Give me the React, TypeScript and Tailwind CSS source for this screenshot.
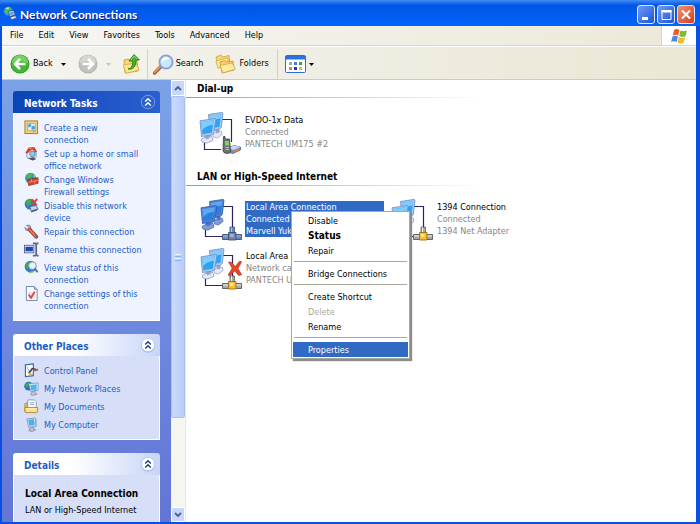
import React from 'react';
import { clsx } from 'clsx';

type IconProps = { className?: string };

/* ---------- Icons ---------- */

const GlobeIcon: React.FC<IconProps> = ({ className }) => (
  <svg viewBox="0 0 16 16" className={className} aria-hidden="true">
    <circle cx="6" cy="6" r="5.2" fill="#3c8fe0" />
    <path d="M2 3Q5 0 8 1L9 4 6 6 5 9 2 8Z" fill="#4fbf3d" />
    <path d="M3 3Q5 1 7 2L6 4Z" fill="#b9efa0" />
    <path d="M6 6l6-1 2 5-6 2z" fill="#cfe4f7" stroke="#29466f" strokeWidth=".8" />
    <path d="M7.500 7l4-.6 1.200 3-4 1.200z" fill="#5aa5e8" />
    <path d="M8 13l6-2 1.500 2.500L10 15.500z" fill="#e3e6ee" stroke="#4b5774" strokeWidth=".7" />
  </svg>
);

const WindowsFlag: React.FC<IconProps> = ({ className }) => (
  <svg viewBox="0 0 18 17" className={className} aria-hidden="true">
    <path d="M3.200 2Q6 .2 9 2L7.600 8Q4.800 6.400 1.800 8Z" fill="#ee5a2a" />
    <path d="M10 2.600Q13 4.200 17 2.600L15.300 9Q12 10.200 8.700 8.500Z" fill="#7cbb35" />
    <path d="M1.600 9Q4.500 7.300 7.300 9L5.900 15Q3 13.300 0 15Z" fill="#4a86dd" />
    <path d="M8.300 9.500Q11.500 11.200 15 10L13.400 16Q10 17.200 6.900 15.500Z" fill="#f0bb2c" />
  </svg>
);

const BackIcon: React.FC<IconProps> = ({ className }) => (
  <svg viewBox="0 0 20 20" className={className} aria-hidden="true">
    <circle cx="10" cy="10" r="9.500" fill="#2f9a25" />
    <circle cx="10" cy="10" r="8.600" fill="#43b735" />
    <path d="M2 9a8 8 0 0 1 16 0Q10 5 2 9z" fill="#85db70" opacity=".75" />
    <path d="M15.500 10H6M10 5l-5 5 5 5" stroke="#fff" strokeWidth="2.600" fill="none" />
  </svg>
);

const ForwardIcon: React.FC<IconProps> = ({ className }) => (
  <svg viewBox="0 0 20 20" className={className} aria-hidden="true">
    <circle cx="10" cy="10" r="9.500" fill="#b3b3b0" />
    <circle cx="10" cy="10" r="8.600" fill="#c1c1be" />
    <path d="M2 9a8 8 0 0 1 16 0Q10 5 2 9z" fill="#d6d6d3" />
    <path d="M4.500 10H14M10 5l5 5-5 5" stroke="#fff" strokeWidth="2.600" fill="none" />
  </svg>
);

const UpFolderIcon: React.FC<IconProps> = ({ className }) => (
  <svg viewBox="0 0 17 20" className={className} aria-hidden="true">
    <path d="M1 6l5-1 1 2 7-1 1 11-13 2z" fill="#f6d873" stroke="#c79a2c" strokeWidth=".8" />
    <path d="M0 11l13-2 3 7-13 3.400z" fill="#fbe68f" stroke="#d4a837" strokeWidth=".8" />
    <path d="M5 15c4-1 5-4 4.500-8H6l5-6.500L16.500 6H13c.5 6-3 10-8 9z" fill="#46ae2f" stroke="#23761a" strokeWidth=".8" />
    <path d="M8 6l3-4 3 3" fill="none" stroke="#8be06a" />
  </svg>
);

const SearchIcon: React.FC<IconProps> = ({ className }) => (
  <svg viewBox="0 0 21 21" className={className} aria-hidden="true">
    <path d="M1.500 19L8 12.500" stroke="#a4531b" strokeWidth="3.400" strokeLinecap="round" />
    <path d="M1.500 18.500L7 13" stroke="#f0a65a" strokeWidth="1.600" strokeLinecap="round" />
    <circle cx="13" cy="8" r="6.600" fill="#c9e8fb" stroke="#8b9ed6" strokeWidth="1.800" />
    <path d="M8.500 8a4.500 4.500 0 0 1 8-3Q12 5 8.500 8z" fill="#fff" />
  </svg>
);

const FoldersIcon: React.FC<IconProps> = ({ className }) => (
  <svg viewBox="0 0 21 20" className={className} aria-hidden="true">
    <path d="M1 3l5-2 1.500 2L14 1.500 15 11 3 14z" fill="#f5d67a" stroke="#cf9d33" strokeWidth=".8" />
    <path d="M1 7l11-3 3 7-12 3z" fill="#fdeaa5" stroke="#d8aa42" strokeWidth=".8" />
    <path d="M5 8l5-1.500L11.500 8 18 7l1 9-12 3z" fill="#f5d067" stroke="#c99229" strokeWidth=".8" />
    <path d="M5 11.500L17 9l3.500 6L8 19z" fill="#fdeba0" stroke="#d6a53a" strokeWidth=".8" />
  </svg>
);

const ViewsIcon: React.FC<IconProps> = ({ className }) => (
  <svg viewBox="0 0 21 18" className={className} aria-hidden="true">
    <rect x=".5" y=".5" width="20" height="17" rx="1" fill="#fff" stroke="#2c6bd4" />
    <path d="M0 1h21v3.500H0z" fill="#2a72dd" />
    <path d="M4 7h3v3H4z" fill="#9aa6c4" />
    <path d="M9 7h3v3H9z" fill="#4a77d8" />
    <path d="M14 7h3v3h-3z" fill="#3fa33b" />
    <path d="M4 12h3v3H4z" fill="#ec7b47" />
    <path d="M9 12h3v3H9z" fill="#1f3e9e" />
    <path d="M14 12h3v3h-3z" fill="#d9ba43" />
  </svg>
);

const NewConnectionIcon: React.FC<IconProps> = ({ className }) => (
  <svg viewBox="0 0 16 16" className={className} aria-hidden="true">
    <rect x="1" y="1" width="13.500" height="13.500" fill="#f3d37b" stroke="#a27a2c" />
    <rect x="3.500" y="3.500" width="8.500" height="8" fill="#dcecfb" stroke="#c09a45" strokeWidth=".7" />
    <path d="M4.500 5l3-1v3l-3 1zM8 7l3.500-1v3.500L8 10.500z" fill="#439be2" />
    <path d="M9 10l4 2-3 1z" fill="#8ba0b7" />
  </svg>
);

const HomeNetworkIcon: React.FC<IconProps> = ({ className }) => (
  <svg viewBox="0 0 16 16" className={className} aria-hidden="true">
    <path d="M3 7l5-4 5 3v6l-5 2-5-2z" fill="#e9edf5" stroke="#7784a0" strokeWidth=".7" />
    <path d="M1.500 7L5 1.500l6-.5 3 5-2 1-3-3.500L3 8.500z" fill="#d9432b" />
    <path d="M5 2l4-.5-2 2z" fill="#f58b6b" />
    <circle cx="9" cy="8.500" r="3" fill="#8ec7f0" stroke="#49678e" strokeWidth=".7" />
    <path d="M4 13l6-1 3 2-4 1.500z" fill="#48506a" />
  </svg>
);

const FirewallIcon: React.FC<IconProps> = ({ className }) => (
  <svg viewBox="0 0 16 16" className={className} aria-hidden="true">
    <circle cx="7" cy="6.500" r="5.800" fill="#3887d3" />
    <path d="M2 4Q5 0 10 1.500L8 5 4 8z" fill="#4cb848" />
    <path d="M10 2l3 3-3 1z" fill="#7ed66a" />
    <path d="M4 8l11-2v6L5 14.500z" fill="#d2472c" stroke="#86200f" strokeWidth=".7" />
    <path d="M4.500 11L15 9M8 7.300v3M11.500 9.500v3" stroke="#f3a58c" strokeWidth=".7" />
  </svg>
);

const DisableIcon: React.FC<IconProps> = ({ className }) => (
  <svg viewBox="0 0 16 16" className={className} aria-hidden="true">
    <circle cx="6.500" cy="6.500" r="5.800" fill="#2f7bd0" />
    <path d="M1.500 4Q4 .5 7 1L8 5 4 9z" fill="#46ad44" />
    <path d="M6 9l7-1 2 4-7 3z" fill="#bcd6ee" stroke="#37517c" strokeWidth=".8" />
    <path d="M8 14l6-1.500" stroke="#4d5874" strokeWidth="1.600" />
    <path d="M8.500 1.500l5 6M14 1L8.500 8" stroke="#e04125" strokeWidth="2" />
  </svg>
);

const RepairIcon: React.FC<IconProps> = ({ className }) => (
  <svg viewBox="0 0 16 16" className={className} aria-hidden="true">
    <path d="M1 3.500L3.500 1l3 1 1 3.500L5 7 2 6.500z" fill="#aab2c4" stroke="#5c657d" strokeWidth=".8" />
    <path d="M1 1.500l3 3" stroke="#eef3ff" strokeWidth="1.500" />
    <path d="M6 6l7 7.500" stroke="#9d3420" strokeWidth="4" strokeLinecap="round" />
    <path d="M6 6l6.500 7" stroke="#ea7a5a" strokeWidth="2.200" strokeLinecap="round" />
    <path d="M12 11l2.500 3" stroke="#5d6373" strokeWidth="1.600" />
  </svg>
);

const RenameIcon: React.FC<IconProps> = ({ className }) => (
  <svg viewBox="0 0 16 16" className={className} aria-hidden="true">
    <rect x=".5" y="3.500" width="10" height="8" fill="#fff" stroke="#5b6680" />
    <rect x="1.500" y="5" width="8" height="5" fill="#1d46b8" />
    <path d="M9.500 1.500h2.500l1 1 1-1h1.500M9.500 14.500h2.500l1-1 1 1h1.500M13 2.500v11" stroke="#59647c" strokeWidth="1.800" fill="none" />
  </svg>
);

const StatusIcon: React.FC<IconProps> = ({ className }) => (
  <svg viewBox="0 0 16 16" className={className} aria-hidden="true">
    <circle cx="7" cy="7" r="6.300" fill="#2f78c8" />
    <path d="M2 4Q5 0 9 1.500L6 5 4 10 1.500 8z" fill="#43a843" />
    <circle cx="9" cy="6" r="4" fill="#e4f3fd" stroke="#8a9ab0" />
    <path d="M11.500 9l3 4" stroke="#5c667c" strokeWidth="2" />
    <path d="M5 13.500l5-1" stroke="#7dcd60" strokeWidth="1.500" />
  </svg>
);

const SettingsIcon: React.FC<IconProps> = ({ className }) => (
  <svg viewBox="0 0 16 16" className={className} aria-hidden="true">
    <path d="M2.500.5H11L14 3.500v12H2.500z" fill="#f7f9ff" stroke="#7182a6" />
    <path d="M11 .5v3h3" fill="#c5d2ea" stroke="#7182a6" />
    <path d="M4.500 6.500h7v7h-7z" fill="#dbe4f5" />
    <path d="M5 9l2.500 3.500L11.500 6" fill="none" stroke="#e34d25" strokeWidth="2" />
  </svg>
);

const ControlPanelIcon: React.FC<IconProps> = ({ className }) => (
  <svg viewBox="0 0 16 16" className={className} aria-hidden="true">
    <path d="M1.500 2L10 1v12.500l-8.500 1z" fill="#fff" stroke="#3868a8" strokeWidth="1.200" />
    <path d="M3 4l4 7 1-6" stroke="#7ea9dc" fill="none" />
    <path d="M5 11l4-5 4 1" stroke="#35415c" strokeWidth="1.600" fill="none" />
    <path d="M10 8l5-1" stroke="#b75b35" strokeWidth="2" />
    <path d="M4 9l3 4 3-2" stroke="#e0a836" strokeWidth="1.300" fill="none" />
  </svg>
);

const NetworkPlacesIcon: React.FC<IconProps> = ({ className }) => (
  <svg viewBox="0 0 16 16" className={className} aria-hidden="true">
    <circle cx="5" cy="5.500" r="4.700" fill="#2770bd" />
    <path d="M1 4Q3 1 6 1L5 5 3 8z" fill="#42a943" />
    <path d="M5 3l10-1v8l-8 1z" fill="#e9f2fc" stroke="#7089ae" strokeWidth=".8" />
    <path d="M6.500 4.200l7-.8v5.800l-6 .6z" fill="#4cb6f2" />
    <path d="M9 11l3-.5v2l2 1.500-5 1.500-2-1z" fill="#bac4d6" stroke="#69758e" strokeWidth=".6" />
  </svg>
);

const DocumentsIcon: React.FC<IconProps> = ({ className }) => (
  <svg viewBox="0 0 16 16" className={className} aria-hidden="true">
    <path d="M1 5l3-1v9H1z" fill="#e9bf56" stroke="#aa7e24" strokeWidth=".8" />
    <path d="M4 1h7l2 2v8H4z" fill="#fff" stroke="#7c8bab" strokeWidth=".8" />
    <path d="M6 4h5M6 6h5" stroke="#8ba6d5" />
    <path d="M1 13.500V9h13.500v4.500q0 1-1 1H2q-1 0-1-1z" fill="#fadf84" stroke="#aa7e24" strokeWidth=".9" />
    <path d="M2 10.500h11.500" stroke="#fff4c0" />
  </svg>
);

const ComputerIcon: React.FC<IconProps> = ({ className }) => (
  <svg viewBox="0 0 16 16" className={className} aria-hidden="true">
    <path d="M3 2l9-1 1 9-8 1z" fill="#e8f0fa" stroke="#7389ac" strokeWidth=".8" />
    <path d="M4.300 3l6.500-.8.8 6.500-6 .6z" fill="#49b1ee" />
    <path d="M11.500 1.500l2 1v8l-1-1z" fill="#9eabc2" />
    <path d="M7 11l3-.3.500 2 2 1-4 1.800-3.500-1z" fill="#b7c1d3" stroke="#626f89" strokeWidth=".6" />
  </svg>
);

const DoubleChevron: React.FC<{ primary?: boolean }> = ({ primary }) => (
  <svg viewBox="0 0 16 16" className="h-4 w-4" aria-hidden="true">
    <circle cx="8" cy="8.500" r="7" fill="#4a66ac" opacity=".4" />
    <circle cx="8" cy="8" r="6.700" fill={primary ? '#2a60cc' : '#fff'} stroke={primary ? '#8aa9e8' : '#b6c3e6'} strokeWidth=".8" />
    <path
      d="M5.200 7.500L8 4.800l2.800 2.700M5.200 11.500L8 8.800l2.800 2.700"
      fill="none"
      stroke={primary ? '#fff' : '#1c3f94'}
      strokeWidth="1.500"
    />
  </svg>
);

const Caret: React.FC<IconProps> = ({ className }) => (
  <svg viewBox="0 0 5 3" className={clsx('h-[3px] w-[5px]', className)} aria-hidden="true">
    <path d="M0 0h5L2.500 3z" fill="currentColor" />
  </svg>
);

/* Two monitors wired to a plug, phone or broken plug */
type ConnectionKind = 'phone' | 'lan' | 'selected' | 'unplugged';

const ConnectionIcon: React.FC<{ kind: ConnectionKind }> = ({ kind }) => {
  const picked = kind === 'selected';
  const frame = picked ? '#4f7fd2' : '#a9c8f0';
  const edge = picked ? '#2f57a8' : '#6a8cc4';
  const screen = picked ? '#2a7fe0' : '#2ea3f4';
  const shine = picked ? '#5fa6ee' : '#7dcdff';
  const foot = picked ? '#5272b6' : '#9aa3c4';
  const base = picked ? '#7f9cd8' : '#e6e9f5';
  const hub = picked ? '#6f87ae' : '#f7bf2a';
  const metal = picked ? '#7088b8' : '#a9a9a4';
  const metalEdge = picked ? '#2d436f' : '#4a4a48';

  return (
    <svg viewBox="0 0 42 43" className="h-[43px] w-[42px] shrink-0" aria-hidden="true">
      <path d="M23 7.500h9.500V30M5.500 31v6.500H22" fill="none" stroke="#2b2362" strokeWidth="1.200" />
      {/* rear monitor */}
      <path d="M14 22l5-3.500 3.500 1 .5 3-4.500 3.500-4-1z" fill={base} stroke={foot} strokeWidth=".8" />
      <path d="M16 18l4-1 .5 3.500-3 1z" fill={foot} />
      <path d="M9.500 2.500L23 .4l1 .8L22.300 15.500l-2 1.800-9.300 1.400z" fill={frame} stroke={edge} strokeWidth=".8" />
      <path d="M10.800 3.800L22 2l-1.500 12.800-9 1.600z" fill={screen} />
      <path d="M10.800 3.800L22 2l-.6 4.500Q15 7 11.200 12z" fill={shine} />
      {/* front monitor */}
      <path d="M2 27.500l6-3.500 5 .5 1 3.500-6 3-5-1z" fill={base} stroke={foot} strokeWidth=".9" />
      <path d="M5.500 23.500l4.500-1 1 3.500-4 1.500z" fill={foot} />
      <path d="M1 8.800L15.800 6.500l1.200.8L14.700 21.300l-1.700 1.800-10.500 1.400z" fill={frame} stroke={edge} strokeWidth=".8" />
      <path d="M2.300 10.100L14.800 8.200l-2 12.500-9.500 1.500z" fill={screen} />
      <path d="M2.300 10.100L14.800 8.200l-.8 4.800Q7 13 3 18.500z" fill={shine} />

      {kind === 'phone' ? (
        <g>
          <path d="M29 36l6-2.500 6.500 1.500v3L34 41.500 28 40z" fill="#7f8cb8" stroke="#505b7b" strokeWidth=".7" />
          <path d="M29 36l6-2.500 6.500 1.500-7 3z" fill="#cdd6ec" />
          <path d="M35 39.700l5-2" stroke="#ec7a3c" strokeWidth="1.500" />
          <path d="M24.500 24.500h1.500V27h4.500l1 13-2 1.500-4-.5-1.500-2z" fill="#6b7375" stroke="#363c3f" strokeWidth=".8" />
          <path d="M26 29h3.800l.4 4.500h-4z" fill="#79da4e" />
          <path d="M26.500 35.500h3.500M26.700 37.500h3.500" stroke="#c7cfd1" strokeWidth=".9" />
        </g>
      ) : (
        <g>
          <path d="M30 28h4.500v6H30z" fill={metal} stroke={metalEdge} strokeWidth=".7" />
          <path d="M31.500 28.500v5" stroke={picked ? '#b9c8e8' : '#f4f4f0'} />
          <path d="M22.500 35.500h19v5h-19z" fill={metal} stroke={metalEdge} strokeWidth=".8" />
          <path d="M23 37h18" stroke={picked ? '#a9bbe0' : '#f4f4f0'} />
          <path d="M28.500 33.500h7.500V41h-7.500z" fill={hub} stroke={picked ? '#34496f' : '#936718'} strokeWidth=".8" />
          <path d="M30 35h3.500v3H30z" fill={picked ? '#9fb2d6' : '#ffe48a'} />
        </g>
      )}
      {kind === 'unplugged' && (
        <path d="M28.500 14l3 .3 3.800 4.200 4.200-5.300 2.200.6-3.700 6.700 3.700 6.300-3 .7-4-4.600-4.700 5.100-2-1 4.200-6.700z" fill="#e5482c" stroke="#a92a14" strokeWidth=".6" />
      )}
    </svg>
  );
};

/* ---------- Data ---------- */

const menus = ['File', 'Edit', 'View', 'Favorites', 'Tools', 'Advanced', 'Help'];

type LinkItem = { icon: React.FC<IconProps>; lines: string[] };

const tasks: LinkItem[] = [
  { icon: NewConnectionIcon, lines: ['Create a new', 'connection'] },
  { icon: HomeNetworkIcon, lines: ['Set up a home or small', 'office network'] },
  { icon: FirewallIcon, lines: ['Change Windows', 'Firewall settings'] },
  { icon: DisableIcon, lines: ['Disable this network', 'device'] },
  { icon: RepairIcon, lines: ['Repair this connection'] },
  { icon: RenameIcon, lines: ['Rename this connection'] },
  { icon: StatusIcon, lines: ['View status of this', 'connection'] },
  { icon: SettingsIcon, lines: ['Change settings of this', 'connection'] },
];

const places: LinkItem[] = [
  { icon: ControlPanelIcon, lines: ['Control Panel'] },
  { icon: NetworkPlacesIcon, lines: ['My Network Places'] },
  { icon: DocumentsIcon, lines: ['My Documents'] },
  { icon: ComputerIcon, lines: ['My Computer'] },
];

type MenuEntry = { label: string; bold?: boolean; disabled?: boolean; active?: boolean };

const contextMenu: MenuEntry[][] = [
  [{ label: 'Disable' }, { label: 'Status', bold: true }, { label: 'Repair' }],
  [{ label: 'Bridge Connections' }],
  [{ label: 'Create Shortcut' }, { label: 'Delete', disabled: true }, { label: 'Rename' }],
  [{ label: 'Properties', active: true }],
];

/* ---------- Pieces ---------- */

const LinkList: React.FC<{ items: LinkItem[] }> = ({ items }) => (
  <ul className="flex flex-col gap-0.5">
    {items.map(({ icon: Icon, lines }) => (
      <li key={lines.join(' ')}>
        <a href="#" className="flex min-h-4 items-start gap-[5px] text-[#215dc6]">
          <Icon className="h-[15px] w-[15px] shrink-0" />
          <span className="pt-0.5 leading-3">
            {lines.map((line) => (
              <span key={line} className="block whitespace-nowrap last:-mb-0.5">{line}</span>
            ))}
          </span>
        </a>
      </li>
    ))}
  </ul>
);

const Panel: React.FC<{ title: string; primary?: boolean; children: React.ReactNode }> = ({ title, primary, children }) => (
  <section className="flex flex-col">
    <h2
      className={clsx(
        'flex h-[22px] shrink-0 items-center justify-between rounded-t-[3px] pr-1 pl-[11px] text-[10px] font-bold',
        primary ? 'bg-linear-to-r from-[#0a45b5] to-[#2a5fd0] text-white' : 'bg-linear-to-r from-white from-40% to-[#c8d5f7] text-[#215dc6]'
      )}
    >
      <span className="pt-0.5">{title}</span>
      <button type="button" aria-label={`Collapse ${title}`}>
        <DoubleChevron primary={primary} />
      </button>
    </h2>
    <div className={clsx('border border-t-0 border-white px-2.5', primary ? 'bg-[#eff3ff] pt-[7px] pb-2.5' : 'bg-[#d6dff7] pt-[7px] pb-1.5')}>
      {children}
    </div>
  </section>
);

const GroupHeading: React.FC<{ children: string }> = ({ children }) => (
  <h2>
    <span className="block pt-px pl-[11px] text-[10px] leading-4 font-bold">{children}</span>
    <span className="block h-px w-[300px] bg-linear-to-r from-[#70a0f0] to-white" />
  </h2>
);

const Connection: React.FC<{ kind: ConnectionKind; lines: [string, string, string] }> = ({ kind, lines }) => (
  <button type="button" className="flex h-[49px] items-start gap-[3px] text-left">
    <ConnectionIcon kind={kind} />
    <span
      className={clsx(
        'mt-0.5 px-px leading-3 whitespace-nowrap',
        kind === 'selected' ? 'w-[139px] bg-[#316ac5] text-white' : 'text-[#868686]'
      )}
    >
      <span className={clsx('block', kind !== 'selected' && 'text-black')}>{lines[0]}</span>
      <span className="block">{lines[1]}</span>
      <span className="block">{lines[2]}</span>
    </span>
  </button>
);

const ContextMenu = () => (
  <div
    role="menu"
    className="absolute top-[131px] left-[105px] w-[119px] border border-[#aca899] bg-white p-px shadow-[2px_2px_1px_#8c8c8c]"
  >
    {contextMenu.map((group, i) => (
      <div key={group[0].label}>
        {i > 0 && <hr className="mx-px my-[3px] border-t border-b border-t-[#aca899] border-b-white" />}
        {group.map((item) => (
          <button
            key={item.label}
            type="button"
            role="menuitem"
            disabled={item.disabled}
            className={clsx(
              'block h-[15px] w-full pl-[15px] text-left leading-4 whitespace-nowrap',
              item.bold && 'text-[10px] font-bold',
              item.disabled && 'text-[#aca899]',
              item.active && 'bg-[#316ac5] text-white'
            )}
          >
            {item.label}
          </button>
        ))}
      </div>
    ))}
  </div>
);

const ScrollBar = () => (
  <div className="flex w-[15px] shrink-0 flex-col border-r border-[#dfe6f5] bg-[#f6f6f1]">
    <button type="button" aria-label="Scroll up" className="flex h-4 shrink-0 items-center justify-center rounded-[2px] border border-white bg-[#c6d6fc]">
      <svg viewBox="0 0 8 6" className="h-1.5 w-2" aria-hidden="true">
        <path d="M1 5l3-3 3 3" fill="none" stroke="#4d6185" strokeWidth="1.800" />
      </svg>
    </button>
    <div className="flex grow-[320] flex-col items-center justify-center gap-px rounded-[2px] border border-[#a9bff0] bg-linear-to-r from-[#cbdafd] to-[#b9cbf9]">
      <span className="h-px w-1.5 bg-[#eef4fe]" />
      <span className="h-px w-1.5 bg-[#8cb0f8]" />
      <span className="h-px w-1.5 bg-[#eef4fe]" />
      <span className="h-px w-1.5 bg-[#8cb0f8]" />
    </div>
    <div className="grow-[91]" />
    <button type="button" aria-label="Scroll down" className="flex h-[15px] shrink-0 items-center justify-center rounded-[2px] border border-white bg-[#c6d6fc]">
      <svg viewBox="0 0 8 6" className="h-1.5 w-2" aria-hidden="true">
        <path d="M1 1l3 3 3-3" fill="none" stroke="#4d6185" strokeWidth="1.800" />
      </svg>
    </button>
  </div>
);

const captionButton =
  'flex h-[19px] w-[18px] items-center justify-center rounded-[3px] border border-[#dfe8fb]';

export default function App() {
  return (
    <div className="flex h-screen flex-col overflow-hidden bg-[#0a50e0] font-['DejaVu_Sans_Condensed','DejaVu_Sans',sans-serif] text-[9px] text-black">
      {/* Title bar */}
      <header className="flex h-[26px] shrink-0 items-center gap-[3px] bg-linear-to-b from-[#3f8cf3] via-[#0055e5] via-20% to-[#0264fb] pr-[5px] pl-[3px]">
        <GlobeIcon className="h-[14px] w-[14px]" />
        <h1 className="grow pt-[3px] font-[Lato,sans-serif] text-[12px] leading-4 font-bold text-white [text-shadow:1px_1px_1px_#0a1883]">
          Network Connections
        </h1>
        <div className="flex gap-0.5 pt-0.5">
          <button type="button" aria-label="Minimize" className={clsx(captionButton, 'bg-linear-to-br from-[#6f9bf5] to-[#1d51d8]')}>
            <svg viewBox="0 0 16 17" className="h-[17px] w-4"><path d="M4 11h6v3H4z" fill="#fff" /></svg>
          </button>
          <button type="button" aria-label="Maximize" className={clsx(captionButton, 'bg-linear-to-br from-[#6f9bf5] to-[#1d51d8]')}>
            <svg viewBox="0 0 16 17" className="h-[17px] w-4">
              <path d="M4 4.500h9v9H4z" fill="none" stroke="#fff" />
              <path d="M3.500 4h10v2.500h-10z" fill="#fff" />
            </svg>
          </button>
          <button type="button" aria-label="Close" className={clsx(captionButton, 'bg-linear-to-br from-[#f0906f] to-[#cf3c16]')}>
            <svg viewBox="0 0 16 17" className="h-[17px] w-4"><path d="M4 4.500l8 8M12 4.500l-8 8" stroke="#fff" strokeWidth="2" /></svg>
          </button>
        </div>
      </header>

      <div className="mr-1 mb-0.5 ml-0.5 flex min-h-0 grow flex-col">
        {/* Menu bar */}
        <nav className="flex h-5 shrink-0 border-b border-[#d8d4c2] bg-linear-to-r from-[#f6f6f4] to-[#ece9d8]">
          <div className="flex grow items-center gap-[15px] pt-px pl-2">
            {menus.map((m) => (
              <button key={m} type="button">{m}</button>
            ))}
          </div>
          <div className="flex w-[35px] items-center justify-center border-l border-[#d8d4c2] bg-white">
            <WindowsFlag className="h-4 w-[17px]" />
          </div>
        </nav>

        {/* Toolbar */}
        <div className="flex h-[34px] shrink-0 items-center border-t border-b border-t-white border-b-[#cfccba] bg-linear-to-r from-[#f4f4f0] to-[#ebe7d5] pt-0.5 pl-2">
          <button type="button" className="flex items-center gap-[3px]">
            <BackIcon className="h-5 w-5" />
            Back
          </button>
          <button type="button" aria-label="Back history" className="ml-2"><Caret /></button>
          <button type="button" aria-label="Forward" disabled className="ml-3"><ForwardIcon className="h-5 w-5" /></button>
          <button type="button" aria-label="Forward history" disabled className="ml-2 text-[#c4c2b6]"><Caret /></button>
          <button type="button" aria-label="Up" className="ml-3"><UpFolderIcon className="h-5 w-[17px]" /></button>
          <span className="ml-[7px] h-[30px] w-px bg-[#d3d0be]" />
          <button type="button" className="ml-[5px] flex items-center gap-0.5">
            <SearchIcon className="h-[21px] w-[21px]" />
            Search
          </button>
          <button type="button" className="ml-3 flex items-center gap-[3px]">
            <FoldersIcon className="h-5 w-[21px]" />
            Folders
          </button>
          <span className="ml-2 h-[30px] w-px bg-[#d3d0be]" />
          <button type="button" aria-label="Views" className="ml-[7px] flex items-center gap-[3px]">
            <ViewsIcon className="h-[18px] w-[21px]" />
            <Caret />
          </button>
        </div>

        <div className="flex min-h-0 grow">
          {/* Task pane */}
          <aside className="flex w-[169px] shrink-0 flex-col gap-[13px] overflow-hidden bg-linear-to-b from-[#7ba2e7] to-[#6375d6] pt-[11px] pr-[11px] pl-[11px]">
            <Panel title="Network Tasks" primary>
              <LinkList items={tasks} />
            </Panel>
            <Panel title="Other Places">
              <LinkList items={places} />
            </Panel>
            <Panel title="Details">
              <div className="pt-1 pl-px">
                <p className="text-[10px] leading-4 font-bold whitespace-nowrap">Local Area Connection</p>
                <p className="leading-4 whitespace-nowrap">LAN or High-Speed Internet</p>
              </div>
            </Panel>
          </aside>

          <ScrollBar />

          {/* Connections */}
          <main className="relative min-w-0 grow bg-white">
            <GroupHeading>Dial-up</GroupHeading>
            <div className="pt-[14px] pb-[7px] pl-[13px]">
              <Connection kind="phone" lines={['EVDO-1x Data', 'Connected', 'PANTECH UM175 #2']} />
            </div>
            <GroupHeading>LAN or High-Speed Internet</GroupHeading>
            <div className="grid grid-cols-[191px_191px] pt-[13px] pl-[14px]">
              <Connection kind="selected" lines={['Local Area Connection', 'Connected', 'Marvell Yukon']} />
              <Connection kind="lan" lines={['1394 Connection', 'Connected', '1394 Net Adapter']} />
              <Connection kind="unplugged" lines={['Local Area Connection 2', 'Network cable unplugged', 'PANTECH UM175']} />
            </div>
            <ContextMenu />
          </main>
        </div>
      </div>
    </div>
  );
}
